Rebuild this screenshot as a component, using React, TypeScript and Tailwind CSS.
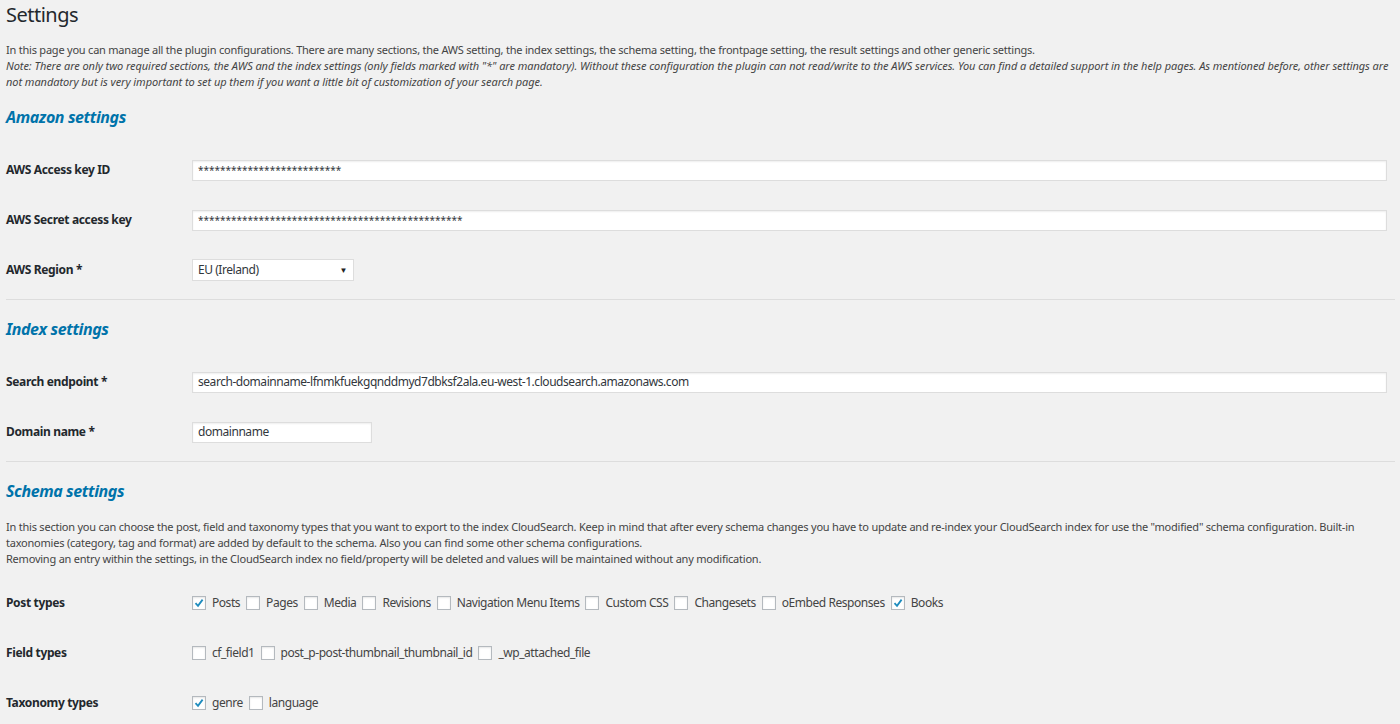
import React from "react";

const font = { fontFamily: '"Noto Sans", "Open Sans", sans-serif' };

function Check({ checked }: { checked?: boolean }) {
  return (
    <span className="inline-flex h-[14px] w-[14px] shrink-0 items-center justify-center border border-[#b4b9be] bg-white shadow-[inset_0_1px_2px_rgba(0,0,0,0.1)]">
      {checked && (
        <svg width="12" height="12" viewBox="0 0 12 12">
          <path d="M2.5 6.2 L5 8.8 L9.6 2.6" fill="none" stroke="#1e8cbe" strokeWidth="1.8" />
        </svg>
      )}
    </span>
  );
}

function Checks({ items }: { items: [string, boolean][] }) {
  return (
    <div className="flex items-center">
      {items.map(([l, c]) => (
        <label key={l} className="mr-[6px] flex items-center text-[12px] tracking-[-0.45px] text-[#444]">
          <Check checked={c} />
          <span className="ml-[6px]">{l}</span>
        </label>
      ))}
    </div>
  );
}

function Row({ label, children }: { label: string; children: React.ReactNode }) {
  return (
    <div className="flex h-[50px] items-center">
      <div className="w-[186px] shrink-0 text-[12px] font-bold tracking-[-0.35px] text-[#23282d]">{label}</div>
      <div className="flex-1">{children}</div>
    </div>
  );
}

function Input({ value, w, small }: { value: string; w?: string; small?: boolean }) {
  return (
    <div
      className={`flex h-[21px] items-center border border-[#ddd] bg-white px-[5px] text-[#32373c] shadow-[inset_0_1px_2px_rgba(0,0,0,0.07)] ${
        w ?? "w-full"
      } ${small ? "text-[10px]" : "text-[12px] tracking-[-0.45px]"}`}
    >
      {value}
    </div>
  );
}

function Heading({ children }: { children: React.ReactNode }) {
  return <h2 className="text-[16px] font-bold italic tracking-[-0.4px] text-[#0073aa]">{children}</h2>;
}

export default function App() {
  return (
    <div style={font} className="min-h-[724px] w-[1400px] bg-[#f1f1f1] pl-[6px] pr-[5px] text-[#444]">
      <h1 className="pt-0 text-[20px] leading-[29px] tracking-[-0.5px] text-[#23282d]">Settings</h1>
      <div className="mt-[13px] text-[11px] leading-[16px]">
        <p className="tracking-[-0.22px]">
          In this page you can manage all the plugin configurations. There are many sections, the AWS setting, the
          index settings, the schema setting, the frontpage setting, the result settings and other generic settings.
        </p>
        <p className="italic tracking-[-0.06px]">
          Note: There are only two required sections, the AWS and the index settings (only fields marked with "*" are
          mandatory). Without these configuration the plugin can not read/write to the AWS services. You can find a
          detailed support in the help pages. As mentioned before, other settings are not mandatory but is very
          important to set up them if you want a little bit of customization of your search page.
        </p>
      </div>

      <div className="mt-[15px]">
        <Heading>Amazon settings</Heading>
      </div>
      <div className="mt-[16px] pr-[8px]">
        <Row label="AWS Access key ID">
          <Input small value="**************************" />
        </Row>
        <Row label="AWS Secret access key">
          <Input small value="************************************************" />
        </Row>
        <Row label="AWS Region *">
          <div className="flex h-[22px] w-[162px] items-center justify-between border border-[#ddd] bg-white pl-[5px] pr-[6px] text-[12px] tracking-[-0.45px] text-[#32373c]">
            <span>EU (Ireland)</span>
            <span className="text-[8px] text-[#222]">▼</span>
          </div>
        </Row>
      </div>
      <div className="mt-[4px] h-px bg-[#ddd]" />

      <div className="mt-[17px]">
        <Heading>Index settings</Heading>
      </div>
      <div className="mt-[16px] pr-[8px]">
        <Row label="Search endpoint *">
          <Input value="search-domainname-lfnmkfuekgqnddmyd7dbksf2ala.eu-west-1.cloudsearch.amazonaws.com" />
        </Row>
        <Row label="Domain name *">
          <Input w="w-[180px]" value="domainname" />
        </Row>
      </div>
      <div className="mt-[4px] h-px bg-[#ddd]" />

      <div className="mt-[17px]">
        <Heading>Schema settings</Heading>
      </div>
      <div className="mt-[16px] text-[11px] leading-[16px] tracking-[-0.22px]">
        <p>
          In this section you can choose the post, field and taxonomy types that you want to export to the index
          CloudSearch. Keep in mind that after every schema changes you have to update and re-index your CloudSearch
          index for use the "modified" schema configuration. Built-in taxonomies (category, tag and format) are added
          by default to the schema. Also you can find some other schema configurations.
        </p>
        <p>
          Removing an entry within the settings, in the CloudSearch index no field/property will be deleted and values
          will be maintained without any modification.
        </p>
      </div>
      <div className="mt-[11px]">
        <Row label="Post types">
          <Checks
            items={[
              ["Posts", true],
              ["Pages", false],
              ["Media", false],
              ["Revisions", false],
              ["Navigation Menu Items", false],
              ["Custom CSS", false],
              ["Changesets", false],
              ["oEmbed Responses", false],
              ["Books", true],
            ]}
          />
        </Row>
        <Row label="Field types">
          <Checks
            items={[
              ["cf_field1", false],
              ["post_p-post-thumbnail_thumbnail_id", false],
              ["_wp_attached_file", false],
            ]}
          />
        </Row>
        <Row label="Taxonomy types">
          <Checks
            items={[
              ["genre", true],
              ["language", false],
            ]}
          />
        </Row>
      </div>
    </div>
  );
}
